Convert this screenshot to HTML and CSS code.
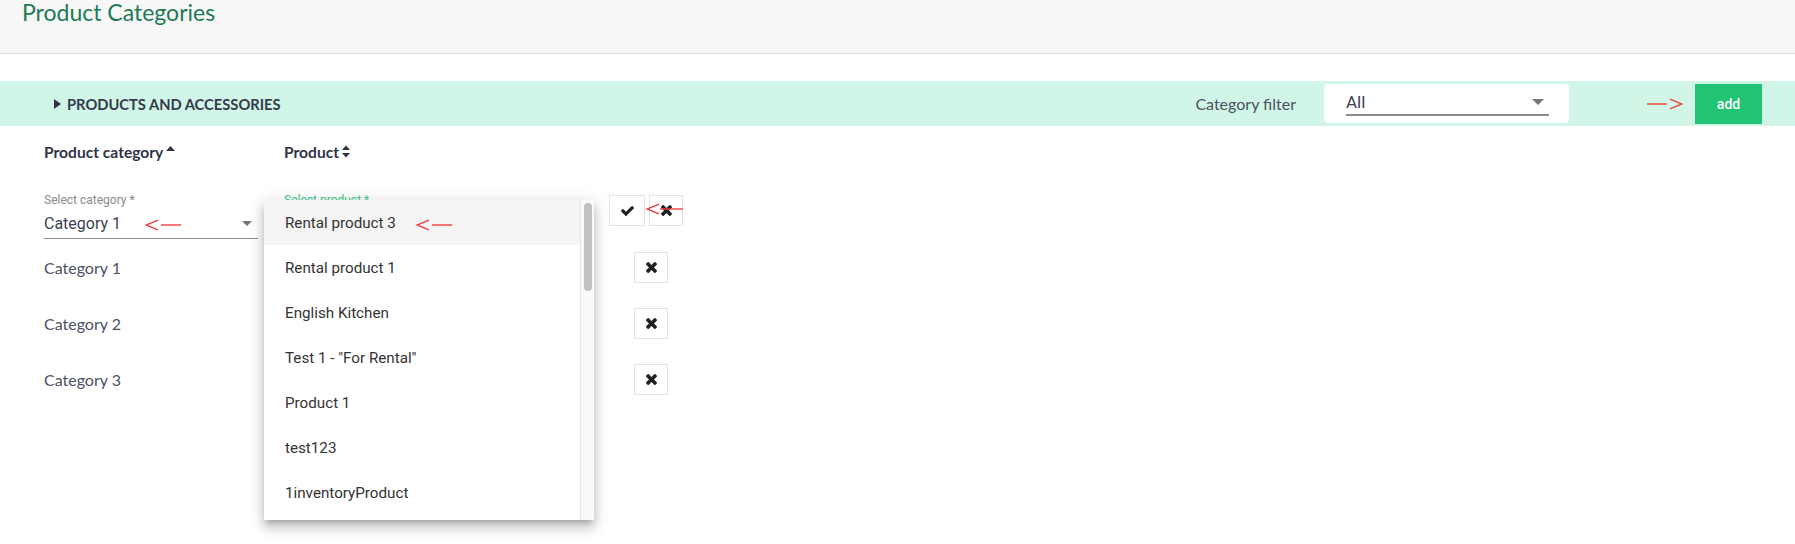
FILE: index.html
```html
<!DOCTYPE html>
<html lang="en">
<head>
<meta charset="utf-8">
<title>Product Categories</title>
<link rel="stylesheet" href="styles.css">
</head>
<body>
<header class="page-header">
  <h1 class="page-title">Product Categories</h1>
</header>

<section class="panel">
  <div class="panel-bar">
    <div class="panel-toggle">
      <span class="caret-right"></span>
      <span class="panel-name">PRODUCTS AND ACCESSORIES</span>
    </div>
    <div class="panel-tools">
      <span class="filter-label">Category filter</span>
      <div class="filter-select">
        <div class="filter-input">
          <span>All</span>
          <span class="select-arrow filter-arrow"></span>
        </div>
      </div>
      <svg class="annot-inline" width="36" height="12" viewBox="0 0 36 12"><line x1="0" y1="6" x2="20" y2="6"/><polyline points="23,1.2 35,6 23,10.8"/></svg>
      <button class="btn-add">add</button>
    </div>
  </div>

  <div class="table">
    <div class="row row-head">
      <div class="head-cell">Product category <svg class="sort-up" width="9" height="5" viewBox="0 0 9 5"><polygon points="0,5 4.5,0 9,5"/></svg></div>
      <div class="head-cell">Product <svg class="sort-both" width="8" height="13" viewBox="0 0 8 13"><polygon points="0,5 4,0.5 8,5"/><polygon points="0,8 4,12.5 8,8"/></svg></div>
      <div></div>
    </div>

    <div class="row row-edit">
      <div class="field">
        <div class="field-label">Select category *</div>
        <div class="field-input"><span>Category 1</span><span class="select-arrow"></span></div>
      </div>
      <div class="field product-field">
        <div class="field-label active">Select product *</div>
        <div class="field-input"><span></span><span class="select-arrow"></span></div>
      </div>
      <div class="actions actions-edit">
        <button class="btn-icon btn-check"><svg width="13" height="10" viewBox="121 334 1550 1188"><path d="M1671 566q0 40-28 68l-724 724-136 136q-28 28-68 28t-68-28l-136-136-362-362q-28-28-28-68t28-68l136-136q28-28 68-28t68 28l294 295 656-657q28-28 68-28t68 28l136 136q28 28 28 68z"/></svg></button>
        <button class="btn-icon"><svg width="11" height="11" viewBox="302 366 1188 1188"><path d="M1490 1322q0 40-28 68l-136 136q-28 28-68 28t-68-28l-294-294-294 294q-28 28-68 28t-68-28l-136-136q-28-28-28-68t28-68l294-294-294-294q-28-28-28-68t28-68l136-136q28-28 68-28t68 28l294 294 294-294q28-28 68-28t68 28l136 136q28 28 28 68t-28 68l-294 294 294 294q28 28 28 68z"/></svg></button>
      </div>

      <svg class="annot annot-cat" width="36" height="12" viewBox="0 0 36 12"><polyline points="13,1.2 1,6 13,10.8"/><line x1="16" y1="6" x2="36" y2="6"/></svg>
      <svg class="annot annot-x" width="37" height="12" viewBox="0 0 37 12"><polyline points="13,1.2 1,6 13,10.8"/><line x1="14" y1="6" x2="37" y2="6"/></svg>

      <div class="menu">
        <ul class="menu-list">
          <li class="menu-item is-active">Rental product 3</li>
          <li class="menu-item">Rental product 1</li>
          <li class="menu-item">English Kitchen</li>
          <li class="menu-item">Test 1 - "For Rental"</li>
          <li class="menu-item">Product 1</li>
          <li class="menu-item">test123</li>
          <li class="menu-item">1inventoryProduct</li>
        </ul>
        <div class="menu-scroll"><div class="menu-thumb"></div></div>
        <svg class="annot annot-menu" width="36" height="12" viewBox="0 0 36 12"><polyline points="13,1.2 1,6 13,10.8"/><line x1="16" y1="6" x2="36" y2="6"/></svg>
      </div>
    </div>

    <div class="row">
      <div class="cell-text">Category 1</div>
      <div></div>
      <div class="actions actions-single"><button class="btn-icon"><svg width="11" height="11" viewBox="302 366 1188 1188"><path d="M1490 1322q0 40-28 68l-136 136q-28 28-68 28t-68-28l-294-294-294 294q-28 28-68 28t-68-28l-136-136q-28-28-28-68t28-68l294-294-294-294q-28-28-28-68t28-68l136-136q28-28 68-28t68 28l294 294 294-294q28-28 68-28t68 28l136 136q28 28 28 68t-28 68l-294 294 294 294q28 28 28 68z"/></svg></button></div>
    </div>
    <div class="row">
      <div class="cell-text">Category 2</div>
      <div></div>
      <div class="actions actions-single"><button class="btn-icon"><svg width="11" height="11" viewBox="302 366 1188 1188"><path d="M1490 1322q0 40-28 68l-136 136q-28 28-68 28t-68-28l-294-294-294 294q-28 28-68 28t-68-28l-136-136q-28-28-28-68t28-68l294-294-294-294q-28-28-28-68t28-68l136-136q28-28 68-28t68 28l294 294 294-294q28-28 68-28t68 28l136 136q28 28 28 68t-28 68l-294 294 294 294q28 28 28 68z"/></svg></button></div>
    </div>
    <div class="row">
      <div class="cell-text">Category 3</div>
      <div></div>
      <div class="actions actions-single"><button class="btn-icon"><svg width="11" height="11" viewBox="302 366 1188 1188"><path d="M1490 1322q0 40-28 68l-136 136q-28 28-68 28t-68-28l-294-294-294 294q-28 28-68 28t-68-28l-136-136q-28-28-28-68t28-68l294-294-294-294q-28-28-28-68t28-68l136-136q28-28 68-28t68 28l294 294 294-294q28-28 68-28t68 28l136 136q28 28 28 68t-28 68l-294 294 294 294q28 28 28 68z"/></svg></button></div>
    </div>
  </div>
</section>
</body>
</html>
```

FILE: styles.css
```css
* { box-sizing: border-box; }

html, body {
  min-height: 100%;
}

body {
  margin: 0;
  min-height: 100vh;
  background: #ffffff;
  font-family: Lato, "Open Sans", sans-serif;
  color: #353a4c;
}

.page-header {
  height: 54px;
  background: #f7f7f7;
  border-bottom: 1px solid #dddddd;
  padding-left: 22px;
}

.page-title {
  margin: 0;
  font-size: 23px;
  font-weight: 400;
  line-height: 25px;
  color: #1d7a55;
}

.panel {
  padding-bottom: 140px;
}

.panel-bar {
  margin-top: 27px;
  height: 45px;
  background: #d1f5e6;
  display: flex;
  align-items: center;
  justify-content: space-between;
  padding: 0 33px 0 54px;
}

.panel-toggle {
  display: flex;
  align-items: center;
  gap: 6px;
}

.caret-right {
  width: 0;
  height: 0;
  border-top: 5px solid transparent;
  border-bottom: 5px solid transparent;
  border-left: 7px solid #2f3445;
}

.panel-name {
  font-size: 14.7px;
  font-weight: 700;
  color: #353a4c;
}

.panel-tools {
  display: flex;
  align-items: center;
}

.filter-label {
  font-size: 16px;
  color: #4b5162;
  margin-right: 28px;
}

.filter-select {
  width: 245px;
  height: 39px;
  background: #ffffff;
  border-radius: 4px;
  padding: 6px 20px 0 22px;
}

.filter-input {
  height: 26px;
  display: flex;
  align-items: center;
  justify-content: space-between;
  border-bottom: 2px solid #8c8c8c;
  font-family: Roboto, sans-serif;
  font-size: 17px;
  color: #3a3f51;
}

.select-arrow {
  width: 0;
  height: 0;
  border-left: 5px solid transparent;
  border-right: 5px solid transparent;
  border-top: 5px solid #757575;
  margin-right: 6px;
}

.filter-arrow {
  border-left-width: 6px;
  border-right-width: 6px;
  border-top-width: 6px;
  margin-right: 5px;
}

.annot-inline {
  margin: 0 12px 0 78px;
  fill: none;
  stroke: #f23d3d;
  stroke-width: 1.4;
}

.annot {
  position: absolute;
  fill: none;
  stroke: #f23d3d;
  stroke-width: 1.4;
  z-index: 3;
}

.btn-add {
  width: 67px;
  height: 40px;
  border: 0;
  background: #20c473;
  color: #ffffff;
  font-family: Roboto, sans-serif;
  font-size: 14px;
  font-weight: 500;
  padding: 0;
}

.table {
  padding-left: 44px;
}

.row {
  display: grid;
  grid-template-columns: 240px 325px 100px;
  height: 56px;
  align-items: center;
}

.row-head {
  margin-top: 16px;
  height: 20px;
  font-size: 15.6px;
  font-weight: 700;
  line-height: 20px;
  color: #2f3445;
}

.head-cell {
  display: flex;
  align-items: flex-start;
  gap: 3px;
}

.sort-up {
  margin-top: 4px;
  fill: #2f3445;
}

.sort-both {
  margin-top: 3px;
  fill: #2f3445;
}

.row-edit {
  position: relative;
  margin-top: 26px;
  height: 51px;
  padding-top: 5px;
  align-items: start;
}

.field {
  width: 214px;
}

.product-field {
  width: 300px;
}

.field-label {
  font-family: Roboto, sans-serif;
  font-size: 12px;
  line-height: 14px;
  color: #8a8a8a;
}

.field-label.active {
  color: #3ec98a;
}

.field-input {
  margin-top: 7px;
  height: 25px;
  padding-bottom: 5px;
  display: flex;
  align-items: center;
  justify-content: space-between;
  border-bottom: 1px solid #8c8c8c;
  font-family: Roboto, sans-serif;
  font-size: 16px;
  line-height: 19px;
  color: #3a3f51;
}

.actions {
  display: flex;
  justify-content: flex-start;
  gap: 4px;
}

.actions-edit {
  padding-top: 2px;
}

.actions-single {
  padding-left: 25px;
}

.btn-icon {
  width: 34px;
  height: 31px;
  padding: 0;
  border: 1px solid #e3e3e3;
  background: #ffffff;
  display: flex;
  align-items: center;
  justify-content: center;
  fill: #1f1f1f;
}

.btn-check {
  width: 36px;
}

.cell-text {
  font-size: 16px;
  color: #4b5162;
}

.annot-cat {
  left: 101px;
  top: 31px;
}

.annot-x {
  left: 602px;
  top: 15px;
}

.menu {
  position: absolute;
  left: 220px;
  top: 12px;
  width: 330px;
  height: 320px;
  background: #ffffff;
  display: flex;
  z-index: 2;
  box-shadow: 0 5px 5px -3px rgba(0, 0, 0, 0.2), 0 8px 10px 1px rgba(0, 0, 0, 0.14), 0 3px 14px 2px rgba(0, 0, 0, 0.12);
}

.menu-list {
  flex: 1;
  margin: 0;
  padding: 0;
  list-style: none;
  overflow: hidden;
}

.menu-item {
  height: 45px;
  flex-shrink: 0;
  display: flex;
  align-items: center;
  padding-left: 21px;
  font-family: Roboto, sans-serif;
  font-size: 15.2px;
  color: #333333;
}

.menu-item.is-active {
  background: #f4f4f4;
}

.menu-scroll {
  width: 14px;
  border-left: 1px solid #e6e6e6;
  background: #fafafa;
  padding: 3px 0 0 3px;
}

.menu-thumb {
  width: 8px;
  height: 88px;
  background: #c1c1c1;
  border-radius: 4px;
}

.annot-menu {
  left: 152px;
  top: 19px;
}
```
